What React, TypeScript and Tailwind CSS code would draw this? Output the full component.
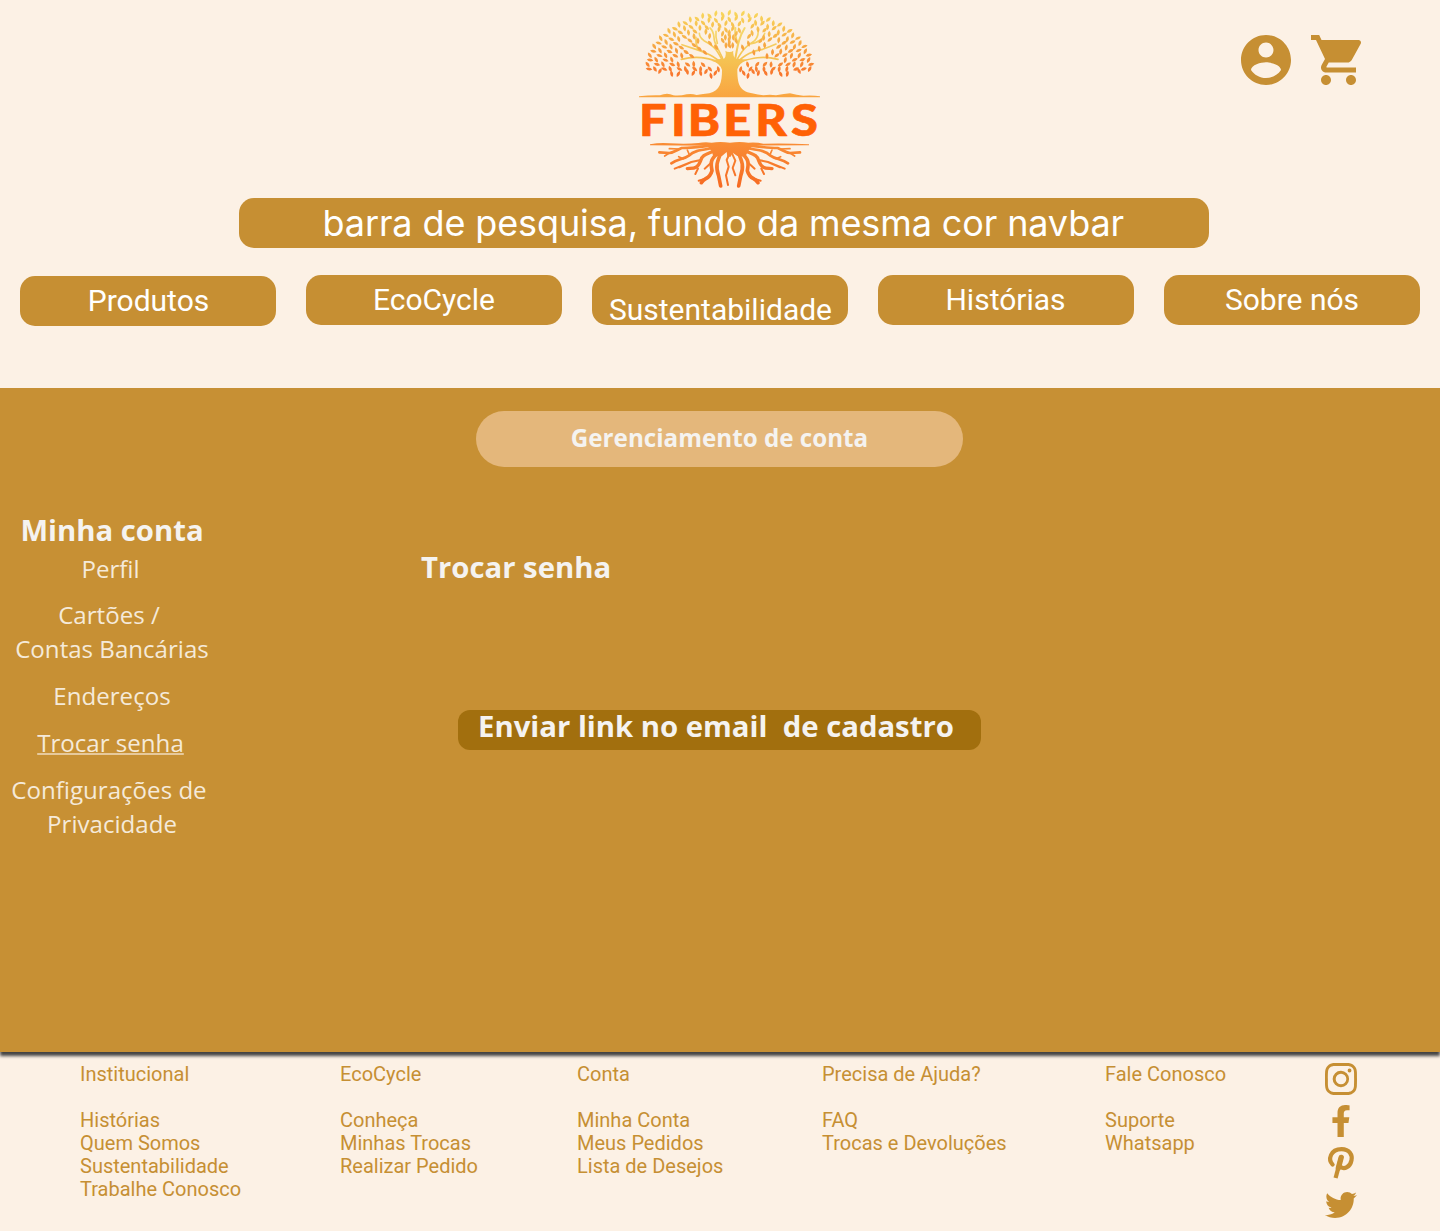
import React from "react";
import { FaFacebookF, FaTwitter } from "react-icons/fa";
import { BsInstagram } from "react-icons/bs";

type Leaf = { x: number; y: number; a: number };

// Branch centre lines, used to keep leaves off the branches.
const branchLines: number[][] = [
  [298, 165, 298, 215], [308, 180, 345, 84], [288, 180, 250, 90],
  [255, 185, 160, 135], [345, 185, 435, 135], [262, 178, 208, 105],
  [336, 178, 390, 105], [250, 185, 155, 178], [350, 185, 445, 178],
];

function distance(px: number, py: number, l: number[]): number {
  const [x1, y1, x2, y2] = l;
  const dx = x2 - x1;
  const dy = y2 - y1;
  const t = Math.max(0, Math.min(1, ((px - x1) * dx + (py - y1) * dy) / (dx * dx + dy * dy)));
  return Math.hypot(px - x1 - t * dx, py - y1 - t * dy);
}

function buildLeaves(): Leaf[] {
  const leaves: Leaf[] = [];
  for (let ring = 0; ring < 9; ring++) {
    const k = 1 - ring * 0.094;
    const rx = 243 * k;
    const ry = 166 * k;
    const count = Math.round((Math.PI * (rx + ry)) / 2 / 17);
    for (let i = 0; i <= count; i++) {
      const t = Math.PI * (i / count);
      const wobble = (i + ring) % 2 ? 3 : -2;
      const x = 298 - Math.cos(t) * (rx + wobble);
      const y = 207 - Math.sin(t) * (ry + wobble);
      if (branchLines.some((l) => distance(x, y, l) < 8)) continue;
      if (Math.abs(x - 298) < 34 && y > 145) continue;
      const tilt = (i + ring) % 2 ? 20 : -26;
      leaves.push({ x, y, a: ((x - 298) / 242) * 55 + tilt });
    }
  }
  const fringe = [[90, 213], [125, 221], [145, 222], [172, 215], [190, 219], [212, 219], [228, 214], [243, 227], [256, 219], [265, 208]];
  fringe.forEach(([x, y], i) => {
    const a = i % 2 ? -12 : 28;
    leaves.push({ x, y, a }, { x: 597 - x, y, a: -a });
  });
  [[298, 98], [298, 126], [286, 112], [310, 112], [288, 136], [308, 136]].forEach(([x, y]) => leaves.push({ x, y, a: 0 }));
  return leaves;
}

const leaves = buildLeaves();

const rootHalf = (
  <>
    <path d="M245 436 C215 440 185 444 155 444 C140 450 132 458 118 459 L88 457" strokeWidth="8" />
    <path d="M148 447 L118 446 M118 459 L104 468" strokeWidth="5" />
    <path d="M250 444 C215 450 190 452 178 466 C162 478 144 476 124 490" strokeWidth="8" />
    <path d="M178 464 L172 450 M160 476 L146 470" strokeWidth="5" />
    <path d="M258 450 C236 462 216 462 212 482 C202 508 190 504 172 506" strokeWidth="10" />
    <path d="M212 480 L184 486 L148 502 M184 486 L134 506 M204 506 L196 522" strokeWidth="6" />
    <path d="M268 452 C244 478 240 482 246 512 C238 540 226 530 214 548" strokeWidth="11" />
    <path d="M242 490 L224 506 M234 534 L206 542" strokeWidth="6" />
    <path d="M276 452 C260 486 256 500 266 528 L272 558" strokeWidth="11" />
  </>
);

function Logo() {
  return (
    <svg viewBox="0 0 600 585" className="h-[195px] w-[200px]" aria-label="Fibers">
      <defs>
        <linearGradient id="leaf-tone" gradientUnits="userSpaceOnUse" x1="0" y1="35" x2="0" y2="235">
          <stop offset="0" stopColor="#f8d75c" />
          <stop offset="0.5" stopColor="#f6a843" />
          <stop offset="1" stopColor="#f9702a" />
        </linearGradient>
        <linearGradient id="trunk-tone" gradientUnits="userSpaceOnUse" x1="0" y1="70" x2="0" y2="292">
          <stop offset="0" stopColor="#f5dc72" />
          <stop offset="0.5" stopColor="#f5c252" />
          <stop offset="1" stopColor="#f9a440" />
        </linearGradient>
        <linearGradient id="root-tone" gradientUnits="userSpaceOnUse" x1="0" y1="425" x2="0" y2="560">
          <stop offset="0" stopColor="#f98e36" />
          <stop offset="1" stopColor="#f66a22" />
        </linearGradient>
      </defs>
      <g fill="none" stroke="url(#trunk-tone)" strokeLinecap="round">
        <path d="M284 195 C274 150 252 140 252 112 Q250 92 240 84 M262 130 Q256 112 258 94" strokeWidth="5" />
        <path d="M312 195 C322 150 322 120 344 84 M322 130 Q314 104 316 84" strokeWidth="6" />
        <path d="M284 195 C262 150 256 140 222 122 Q208 112 208 100" strokeWidth="5" />
        <path d="M312 195 C336 150 344 142 374 122 Q386 110 384 92 M360 132 Q400 124 404 100" strokeWidth="5" />
        <path d="M284 195 C246 166 230 158 198 148 Q180 142 156 134 M204 150 Q196 130 198 112" strokeWidth="5" />
        <path d="M312 195 C346 162 370 152 398 148 Q420 140 438 132" strokeWidth="5" />
        <path d="M284 190 C240 178 210 164 154 178" strokeWidth="5" />
        <path d="M312 190 C356 178 390 164 444 178" strokeWidth="5" />
      </g>
      <path
        d="M286 152 Q290 156 298 156 Q306 156 310 152 Q308 168 316 176 Q334 176 352 180 Q326 190 322 208 C322 248 326 274 366 280 Q384 284 400 286 Q420 282 438 286 Q464 282 480 280 Q500 286 520 287 Q550 285 570 289 L570 292 L27 292 L27 289 Q60 285 90 286 Q112 276 130 286 Q150 288 170 283 Q185 280 200 285 Q220 282 238 280 C270 272 276 246 276 210 Q272 190 244 182 Q264 176 282 176 Q290 168 286 152 Z"
        fill="url(#trunk-tone)"
      />
      <g fill="url(#leaf-tone)">
        {leaves.map((l, i) => {
          const r = (l.a * Math.PI) / 180;
          const p = (u: number, v: number) =>
            `${(l.x + u * Math.cos(r) - v * Math.sin(r)).toFixed(1)} ${(l.y + u * Math.sin(r) + v * Math.cos(r)).toFixed(1)}`;
          return <path key={i} d={`M${p(0, -10)} Q${p(9, 0)} ${p(0, 10)} Q${p(-9, 0)} ${p(0, -10)} Z`} />;
        })}
      </g>
      <text
        y="407"
        x="24.5 112 157.5 254 341.5 439"
        transform="scale(1.1 1)"
        fontSize="133"
        fontWeight="900"
        fill="#ff6105"
        stroke="#ff6105"
        strokeWidth="2"
        strokeLinejoin="round"
        className="font-['Lato',sans-serif]"
      >
        FIBERS
      </text>
      <path
        d="M60 433 Q90 427 120 430 Q170 433 205 429 Q225 425 245 428 Q270 424 300 428 Q330 424 355 428 Q380 426 400 431 Q470 429 537 433 L537 436 L370 437 Q356 446 346 470 L322 468 L308 458 L302 470 L292 470 L290 456 L276 468 L250 470 Q246 446 228 437 L60 436 Z"
        fill="url(#root-tone)"
      />
      <g fill="none" stroke="url(#root-tone)" strokeLinejoin="round" strokeLinecap="round">
        {rootHalf}
        <g transform="translate(598 0) scale(-1 1)">{rootHalf}</g>
        <path d="M298 462 L290 480 L296 500 L288 526 L294 555" strokeWidth="6" />
        <path d="M306 460 L316 482 L308 504 L316 526" strokeWidth="6" />
      </g>
    </svg>
  );
}

const navItems = [
  { label: "Produtos", cls: "mt-px pt-[7px] pl-px" },
  { label: "EcoCycle", cls: "pt-[7px]" },
  { label: "Sustentabilidade", cls: "pt-[17px] pl-px" },
  { label: "Histórias", cls: "pt-[7px] pr-px" },
  { label: "Sobre nós", cls: "pt-[7px]" },
];

const footerColumns = [
  { title: "Institucional", width: "w-[260px]", links: ["Histórias", "Quem Somos", "Sustentabilidade", "Trabalhe Conosco"] },
  { title: "EcoCycle", width: "w-[237px]", links: ["Conheça", "Minhas Trocas", "Realizar Pedido"] },
  { title: "Conta", width: "w-[245px]", links: ["Minha Conta", "Meus Pedidos", "Lista de Desejos"] },
  { title: "Precisa de Ajuda?", width: "w-[283px]", links: ["FAQ", "Trocas e Devoluções"] },
  { title: "Fale Conosco", width: "w-[220px]", links: ["Suporte", "Whatsapp"] },
];

export default function App() {
  return (
    <div className="h-[1231px] w-[1440px] overflow-hidden bg-[#fcf1e5]">
      <header className="h-[388px] font-['Roboto',sans-serif] text-white">
        <div className="flex h-[198px] pl-[630px]">
          <Logo />
          <div className="ml-[406px] flex pt-[30px] text-[#c68f33]">
            <svg viewBox="0 0 24 24" className="h-[60px] w-[60px]" fill="currentColor">
              <path d="M12 2C6.48 2 2 6.48 2 12s4.48 10 10 10 10-4.48 10-10S17.52 2 12 2zm0 3c1.66 0 3 1.34 3 3s-1.34 3-3 3-3-1.34-3-3 1.34-3 3-3zm0 14.2c-2.5 0-4.71-1.28-6-3.22.03-1.99 4-3.08 6-3.08 1.99 0 5.97 1.09 6 3.08-1.29 1.94-3.5 3.22-6 3.22z" />
            </svg>
            <svg viewBox="1 2 21 20" className="mt-[5px] ml-[15px] h-[50px] w-[52.5px]" fill="currentColor">
              <path d="M7 18c-1.1 0-1.99.9-1.99 2S5.9 22 7 22s2-.9 2-2-.9-2-2-2zM1 2v2h2l3.6 7.59-1.35 2.45c-.16.28-.25.61-.25.96 0 1.1.9 2 2 2h12v-2H7.42c-.14 0-.25-.11-.25-.25l.03-.12.9-1.63h7.45c.75 0 1.41-.41 1.75-1.03l3.58-6.49c.08-.14.12-.31.12-.48 0-.55-.45-1-1-1H5.21l-.94-2H1zm16 16c-1.1 0-1.99.9-1.99 2s.89 2 1.99 2 2-.9 2-2-.9-2-2-2z" />
            </svg>
          </div>
        </div>
        <div className="ml-[239px] h-[50px] w-[970px] rounded-[15px] bg-[#c68f33] pl-[83.5px] font-['Inter',sans-serif] text-[36px] leading-[50px] tracking-[-0.11px] whitespace-nowrap">
          barra de pesquisa, fundo da mesma cor navbar
        </div>
        <nav className="mt-[27px] flex items-start gap-[30px] pl-5">
          {navItems.map((n) => (
            <a key={n.label} className={`h-[50px] w-[256px] rounded-[15px] bg-[#c68f33] text-center text-[30px] leading-[35px] ${n.cls}`}>
              {n.label}
            </a>
          ))}
        </nav>
      </header>

      <main className="h-[664px] bg-[#c79034] pt-[23px] font-['Open_Sans',sans-serif] text-[#f5f3f0] shadow-[0_4px_3px_0px_#444]">
        <h1 className="ml-[476px] h-[55.5px] w-[487px] rounded-full bg-[#e4b77b] text-center text-[24.2px] leading-[54px] font-bold">
          Gerenciamento de conta
        </h1>
        <div className="flex">
          <aside className="w-[224px] pt-[42.5px] text-center text-[24.1px] leading-[34px] text-[#f5ead9]">
            <h2 className="text-[29.3px] leading-[42px] font-bold text-[#f5f3f0]">Minha conta</h2>
            <p className="mt-px pr-[3px]">Perfil</p>
            <p className="mt-[12px] pr-[6px]">Cartões /</p>
            <p>Contas Bancárias</p>
            <p className="mt-[13px]">Endereços</p>
            <p className="mt-[13px] pr-[3px] underline decoration-2 underline-offset-[1px] [text-decoration-skip-ink:none] decoration-[#e6c99c]">Trocar senha</p>
            <p className="mt-[13px] pr-[6px]">Configurações de</p>
            <p>Privacidade</p>
          </aside>
          <section className="pt-[79.5px] pl-[197px]">
            <h2 className="text-[29.3px] leading-[42px] font-bold">Trocar senha</h2>
            <button className="mt-[122px] ml-[37px] flex h-[40px] w-[523px] rounded-[12px] bg-[#a26f0e] pl-[20px] text-left text-[29.3px] leading-[32px] font-bold whitespace-pre">
              {"Enviar link no email  de cadastro"}
            </button>
          </section>
        </div>
      </main>

      <footer className="flex pt-[11px] pl-20 font-['Roboto',sans-serif] text-[20px] leading-[23px] text-[#c68f33]">
        {footerColumns.map((c) => (
          <div key={c.title} className={c.width}>
            <h3>{c.title}</h3>
            <ul className="mt-[23px]">
              {c.links.map((l) => (
                <li key={l}>{l}</li>
              ))}
            </ul>
          </div>
        ))}
        <div className="flex flex-col items-center gap-[10px]">
          <BsInstagram size={32} />
          <FaFacebookF size={32} />
          <svg viewBox="0 0 32 32" className="h-8 w-8" fill="none" stroke="currentColor" strokeWidth="4.2" strokeLinecap="round">
            <path d="M7.6 17.6 C2.8 12.6 5.2 2.2 16.6 2.1 C24.6 2.1 27.6 8.2 26.5 13.2 C25.1 20.2 19.4 22.6 15.6 20" />
            <path d="M16.4 9.4 L10.6 31" strokeLinecap="butt" />
            <path d="M16.2 10.4 L13.4 21" strokeWidth="5.4" />
          </svg>
          <FaTwitter size={32} />
        </div>
      </footer>
    </div>
  );
}
